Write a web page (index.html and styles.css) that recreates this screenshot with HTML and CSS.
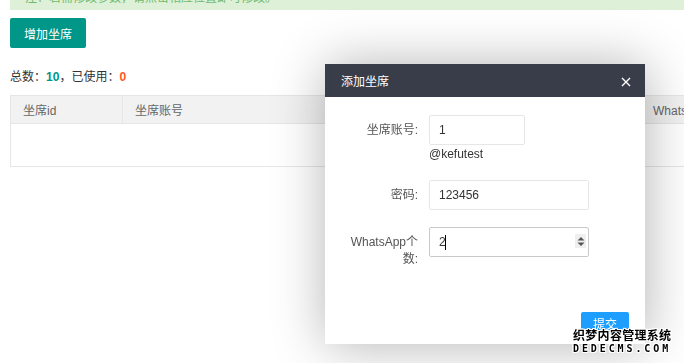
FILE: index.html
```html
<!DOCTYPE html>
<html lang="zh-CN">
<head>
    <meta charset="UTF-8">
    <meta name="viewport" content="width=device-width, initial-scale=1.0">
    <title>坐席管理</title>
    <link rel="stylesheet" href="styles.css">
</head>
<body>
    <div class="page">
        <div class="notice">注：若需修改参数，请点击相应位置即可修改。</div>
        <button type="button" class="btn-add">增加坐席</button>
        <p class="stats">总数：<span class="num-total">10</span>，已使用：<span class="num-used">0</span></p>
        <table class="seat-table">
            <thead>
                <tr>
                    <th class="col-id">坐席id</th>
                    <th class="col-account">坐席账号</th>
                    <th class="col-wa">WhatsApp个数</th>
                    <th>操作</th>
                </tr>
            </thead>
            <tbody>
                <tr><td class="empty" colspan="4"></td></tr>
            </tbody>
        </table>
    </div>

    <div class="layer">
        <div class="layer-title">
            <span>添加坐席</span>
            <svg class="layer-close" width="10" height="10" viewBox="0 0 10 10">
                <path d="M1 1L9 9M9 1L1 9" stroke="#fff" stroke-width="1.4" fill="none"/>
            </svg>
        </div>
        <div class="layer-body">
            <div class="form-row">
                <label class="form-label">坐席账号:</label>
                <div class="form-field">
                    <input class="input input-short" type="text" value="1">
                    <div class="form-note">@kefutest</div>
                </div>
            </div>
            <div class="form-row">
                <label class="form-label">密码:</label>
                <div class="form-field">
                    <input class="input" type="text" value="123456">
                </div>
            </div>
            <div class="form-row">
                <label class="form-label">WhatsApp个数:</label>
                <div class="form-field">
                    <div class="num-wrap">
                        <input class="input input-active" type="text" value="2">
                        <span class="caret"></span>
                        <span class="spinner">
                            <svg width="8" height="11" viewBox="0 0 8 11">
                                <path d="M4 1L7.5 4.5H0.5Z M4 10L7.5 6.5H0.5Z" fill="#555"/>
                            </svg>
                        </span>
                    </div>
                </div>
            </div>
        </div>
        <div class="layer-foot">
            <button type="button" class="btn-submit">提交</button>
        </div>
    </div>

    <div class="watermark">
        <div class="wm-cn">织梦内容管理系统</div>
        <div class="wm-en">DEDECMS.COM</div>
    </div>
</body>
</html>
```

FILE: styles.css
```css
html, body {
    margin: 0;
    overflow: hidden;
}

body {
    font-family: "Liberation Sans", "Noto Sans CJK SC", sans-serif;
    font-size: 12px;
    color: #333;
    background: #fff;
}

.page {
    width: 1000px;
    padding: 0 10px;
}

.notice {
    margin-top: -11px;
    padding: 0 15px 3px;
    line-height: 18px;
    background-color: #dff0d8;
    color: #6dbb70;
}

.btn-add {
    display: block;
    margin-top: 8px;
    height: 30px;
    padding: 0 14px;
    border: none;
    border-radius: 2px;
    background-color: #009688;
    color: #fff;
    font-family: inherit;
    font-size: 12px;
    cursor: pointer;
}

.stats {
    margin: 20px 0 9px;
    line-height: 18px;
}

.num-total {
    font-weight: bold;
    color: #009688;
}

.num-used {
    font-weight: bold;
    color: #ff5722;
}

.seat-table {
    width: 900px;
    border-collapse: collapse;
    table-layout: fixed;
}

.seat-table th,
.seat-table td {
    border: 1px solid #e6e6e6;
    padding: 0 12px;
    text-align: left;
    font-weight: normal;
}

.seat-table th {
    height: 27px;
    background-color: #f2f2f2;
    color: #666;
}

.col-id {
    width: 87px;
}

.col-account {
    width: 493px;
}

.col-wa {
    width: 120px;
}

.seat-table .empty {
    height: 42px;
}

/* popup */
.layer {
    position: fixed;
    left: 325px;
    top: 64px;
    width: 320px;
    height: 280px;
    display: flex;
    flex-direction: column;
    background: #fff;
    box-shadow: 1px 1px 50px rgba(0, 0, 0, 0.3);
}

.layer-title {
    display: flex;
    justify-content: space-between;
    align-items: center;
    height: 33px;
    padding: 0 14px 0 16px;
    background-color: #393d49;
    color: #fff;
}

.layer-close {
    margin-top: 3px;
}

.layer-body {
    flex: 1;
    display: flex;
    flex-direction: column;
    gap: 17px;
    padding: 18px 0 0 21px;
}

.form-row {
    display: flex;
    gap: 11px;
}

.form-label {
    width: 72px;
    padding-top: 7px;
    line-height: 17px;
    text-align: right;
    color: #555;
}

.input {
    box-sizing: border-box;
    display: block;
    width: 160px;
    height: 30px;
    padding: 0 9px;
    border: 1px solid #e6e6e6;
    border-radius: 2px;
    font-family: inherit;
    font-size: 12px;
    color: #333;
    outline: none;
}

.input-short {
    width: 96px;
}

.input-active {
    border-color: #c9c9c9;
}

.form-note {
    line-height: 18px;
    color: #333;
}

.num-wrap {
    position: relative;
    width: 160px;
}

.caret {
    position: absolute;
    left: 16px;
    top: 8px;
    width: 1px;
    height: 15px;
    background: #000;
}

.spinner {
    position: absolute;
    right: 3px;
    top: 7px;
    width: 11px;
    height: 14px;
    display: flex;
    align-items: center;
    justify-content: center;
    background: #efefef;
}

.layer-foot {
    display: flex;
    justify-content: flex-end;
    padding: 0 16px 10px;
}

.btn-submit {
    height: 22px;
    padding: 0 12px;
    border: none;
    border-radius: 2px;
    background-color: #1e9fff;
    color: #fff;
    font-family: inherit;
    font-size: 12px;
}

/* watermark */
.watermark {
    position: fixed;
    left: 573px;
    top: 328px;
    color: #000;
    text-shadow: 1px 0 0 #fff, -1px 0 0 #fff, 0 1px 0 #fff, 0 -1px 0 #fff,
        1px 1px 0 #fff, -1px -1px 0 #fff, 1px -1px 0 #fff, -1px 1px 0 #fff;
}

.wm-cn {
    font-family: "Noto Sans CJK SC", sans-serif;
    font-size: 12px;
    font-weight: bold;
    line-height: 14px;
    letter-spacing: 0.3px;
}

.wm-en {
    margin-top: 1px;
    font-family: "DejaVu Sans Mono", monospace;
    font-size: 10px;
    font-weight: bold;
    line-height: 11px;
    letter-spacing: 2.9px;
}
```
